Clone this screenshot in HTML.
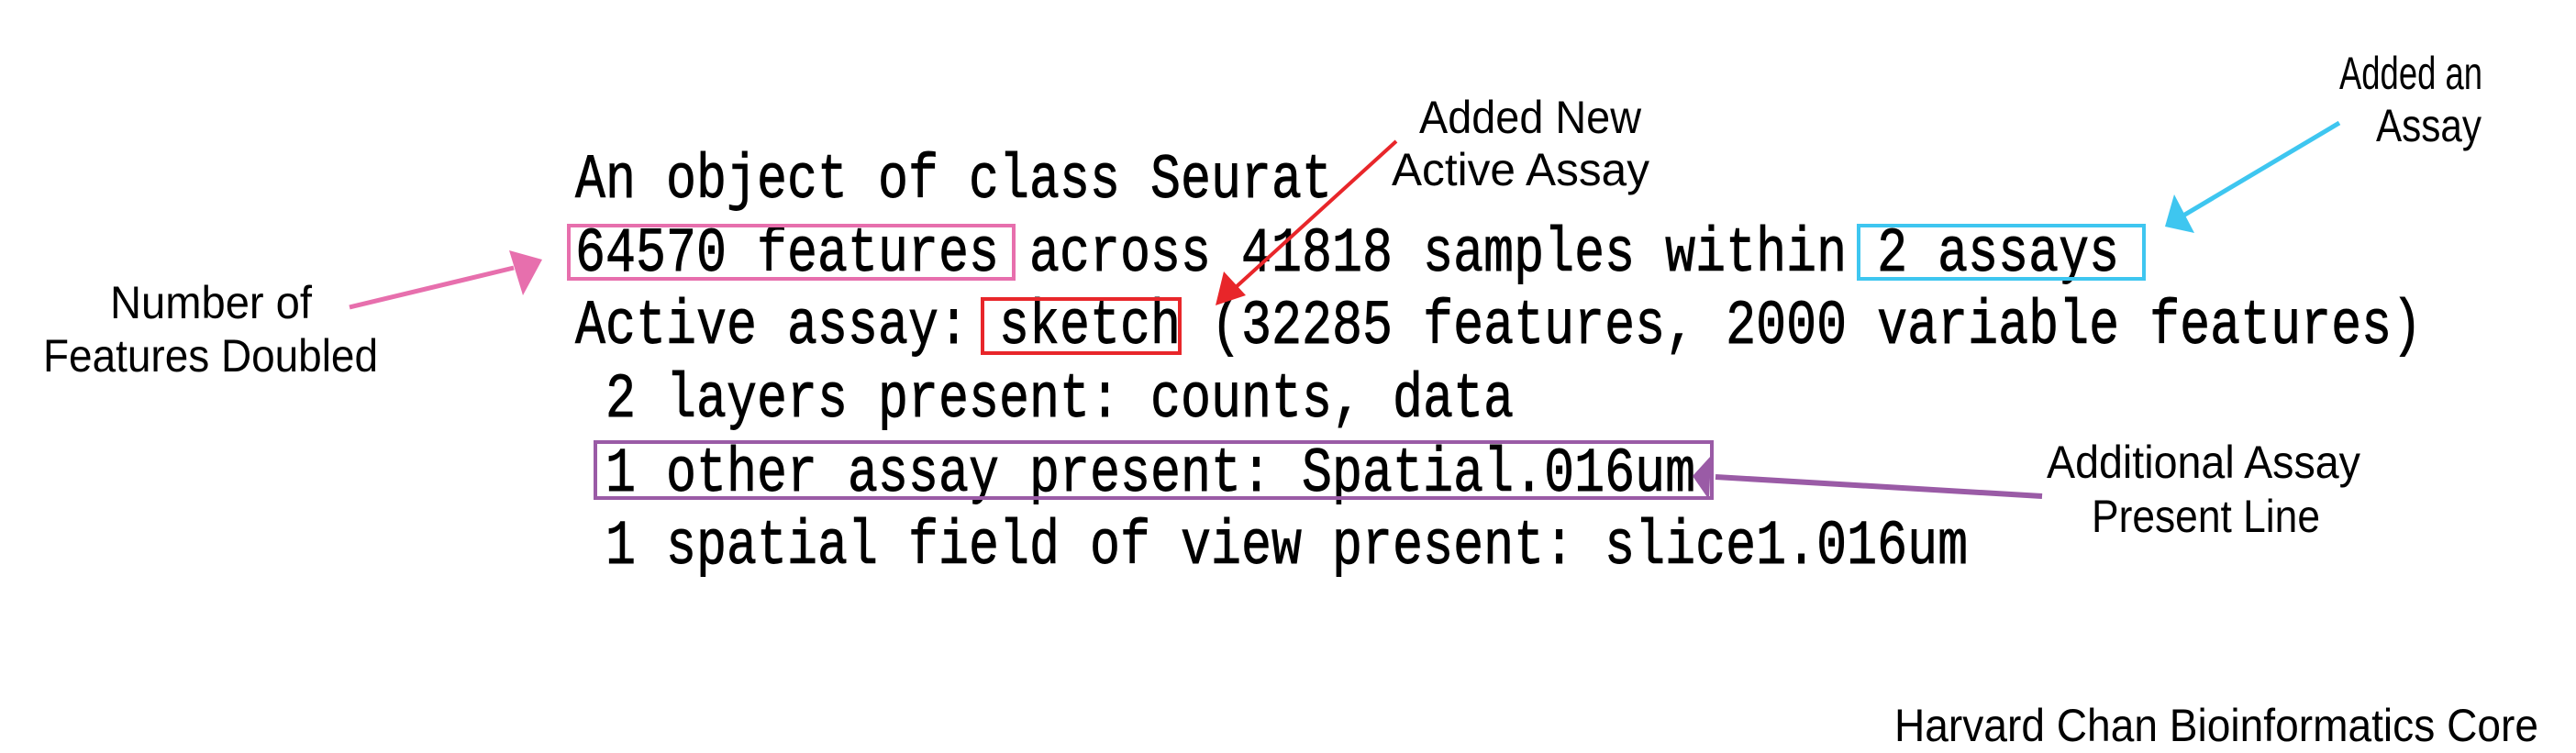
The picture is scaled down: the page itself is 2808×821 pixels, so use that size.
<!DOCTYPE html>
<html><head><meta charset="utf-8"><style>
html,body{margin:0;padding:0;background:#fff;}
svg{display:block}
.m{font-family:"Liberation Mono",monospace;font-size:55px;fill:#000;stroke:#000;stroke-width:0.7px}
.s{font-family:"Liberation Sans",sans-serif;font-size:50px;fill:#000}
</style></head><body>
<svg width="2808" height="821" viewBox="0 0 2808 821" xmlns="http://www.w3.org/2000/svg">
<g transform="translate(627,215) scale(1,1.25)"><text class="m" x="0" y="0" textLength="825" lengthAdjust="spacingAndGlyphs">An object of class Seurat</text></g>
<g transform="translate(627,295) scale(1,1.25)"><text class="m" x="0" y="0" xml:space="preserve">64570 features across 41818 samples within 2 assays</text></g>
<g transform="translate(627,374) scale(1,1.25)"><text class="m" x="0" y="0" xml:space="preserve">Active assay: sketch (32285 features, 2000 variable features)</text></g>
<g transform="translate(627,454) scale(1,1.25)"><text class="m" x="0" y="0" xml:space="preserve"> 2 layers present: counts, data</text></g>
<g transform="translate(627,535) scale(1,1.25)"><text class="m" x="0" y="0" xml:space="preserve"> 1 other assay present: Spatial.016um</text></g>
<g transform="translate(627,614) scale(1,1.25)"><text class="m" x="0" y="0" xml:space="preserve"> 1 spatial field of view present: slice1.016um</text></g>

<rect x="620" y="246" width="485" height="58" fill="none" stroke="#e76fad" stroke-width="4"/>
<rect x="2026" y="246" width="311" height="58" fill="none" stroke="#3ec6f0" stroke-width="4"/>
<rect x="1071" y="326" width="215" height="59" fill="none" stroke="#e8262a" stroke-width="4"/>
<rect x="649" y="482" width="1217" height="61" fill="none" stroke="#9a5ba6" stroke-width="4"/>

<text class="s" x="120" y="347" textLength="220" lengthAdjust="spacingAndGlyphs">Number of</text>
<text class="s" x="47" y="405" textLength="365" lengthAdjust="spacingAndGlyphs">Features Doubled</text>
<text class="s" x="1547" y="145" textLength="242" lengthAdjust="spacingAndGlyphs">Added New</text>
<text class="s" x="1517" y="202" textLength="281" lengthAdjust="spacingAndGlyphs">Active Assay</text>
<text class="s" x="2550" y="97" textLength="156" lengthAdjust="spacingAndGlyphs">Added an</text>
<text class="s" x="2590" y="154" textLength="115" lengthAdjust="spacingAndGlyphs">Assay</text>
<text class="s" x="2231" y="521" textLength="342" lengthAdjust="spacingAndGlyphs">Additional Assay</text>
<text class="s" x="2280" y="580" textLength="249" lengthAdjust="spacingAndGlyphs">Present Line</text>
<text class="s" x="2065" y="808" textLength="702" lengthAdjust="spacingAndGlyphs">Harvard Chan Bioinformatics Core</text>

<line x1="381" y1="335" x2="560" y2="292" stroke="#e76fad" stroke-width="5"/>
<polygon points="591,283 555,273 570,322" fill="#e76fad"/>
<line x1="1522" y1="154" x2="1345" y2="315" stroke="#e8262a" stroke-width="4"/>
<polygon points="1325,333 1334,296 1358,322" fill="#e8262a"/>
<line x1="2550" y1="134" x2="2380" y2="235" stroke="#3ec6f0" stroke-width="5"/>
<polygon points="2360,247 2370,212 2392,254" fill="#3ec6f0"/>
<line x1="2226" y1="541" x2="1870" y2="520" stroke="#9a5ba6" stroke-width="6"/>
<polygon points="1845,519 1865,497 1863,545" fill="#9a5ba6"/>
</svg>
</body></html>
